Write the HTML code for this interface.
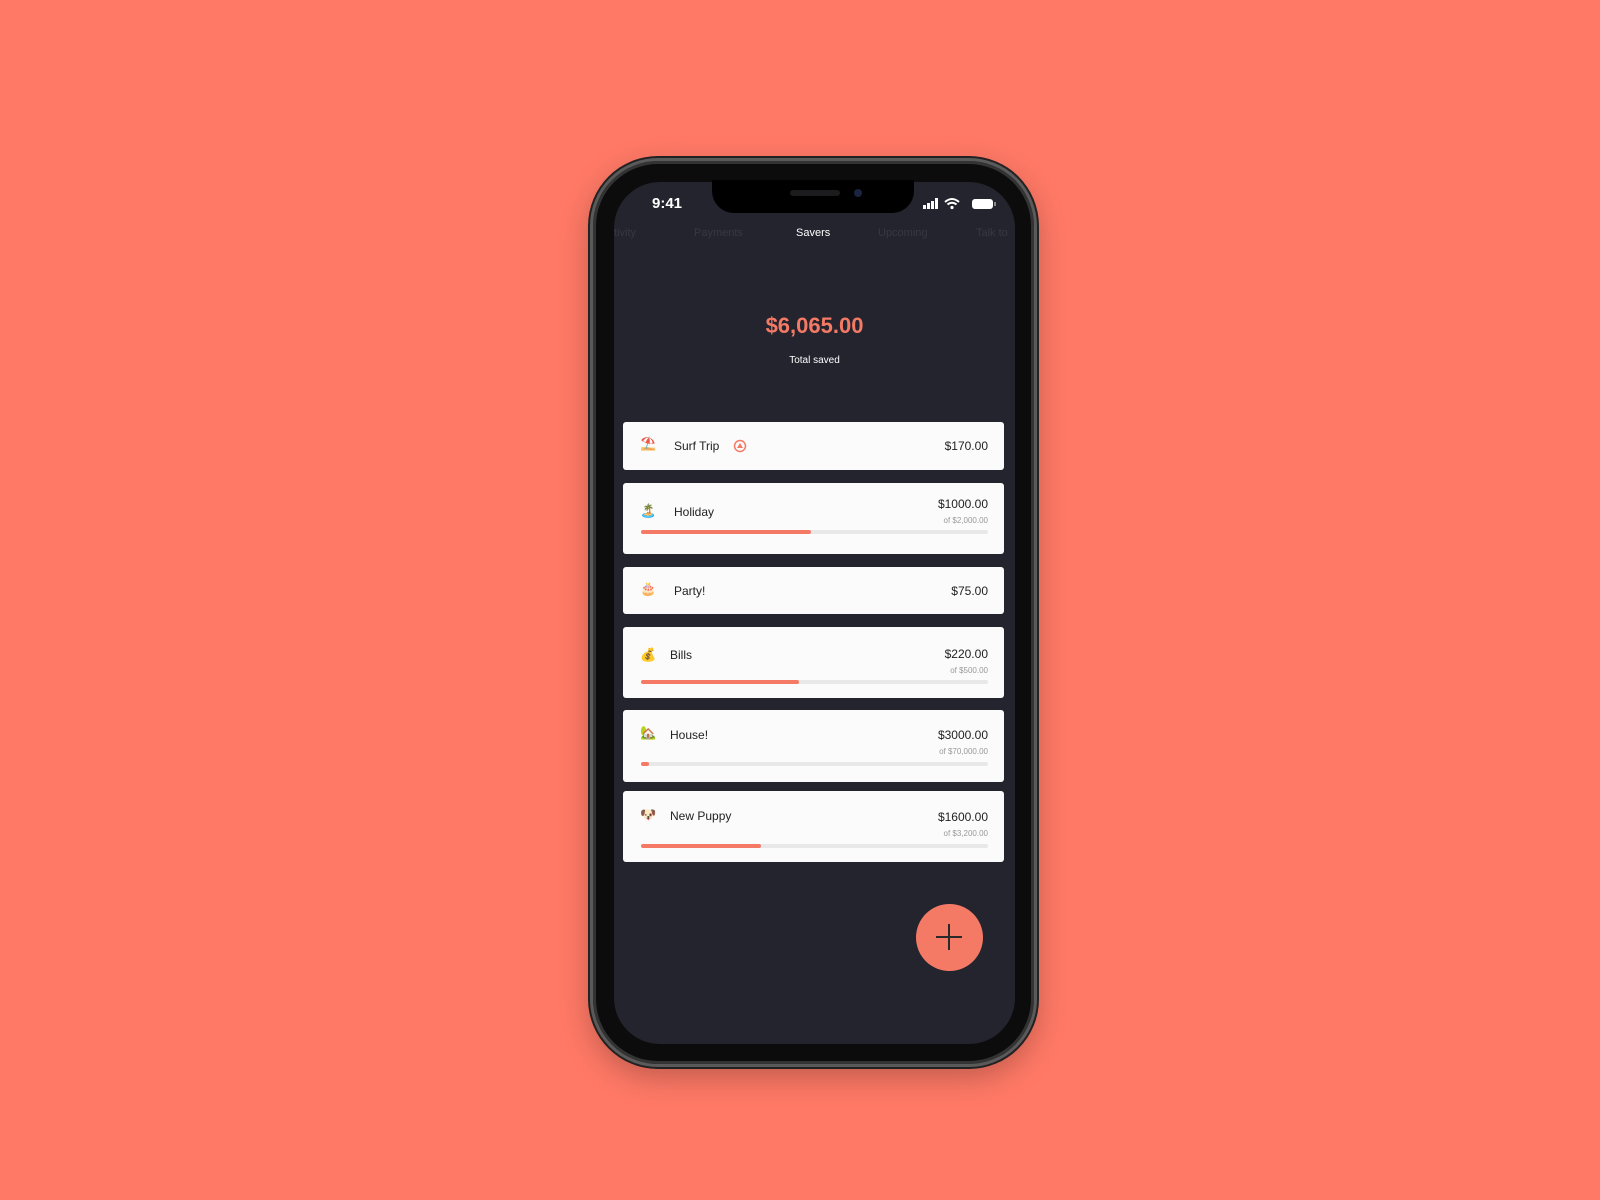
<!DOCTYPE html>
<html><head><meta charset="utf-8"><style>
*{margin:0;padding:0;box-sizing:border-box}
body{width:1600px;height:1200px;background:#ff7966;position:relative;overflow:hidden;font-family:"Liberation Sans",sans-serif}
.abs{position:absolute}
.phone{left:590px;top:158px;width:447px;height:909px;border-radius:68px;background:#0c0c0c;border:3px solid #5a5a5a;box-shadow:0 0 0 2px #222,inset 0 0 0 3px #333,0 10px 30px rgba(0,0,0,.25)}
.screen{left:614px;top:182px;width:401px;height:862px;border-radius:46px;background:#23242e;overflow:hidden}
.notch{left:712px;top:180px;width:202px;height:33px;background:#000;border-radius:0 0 22px 22px}
.card{position:absolute;left:623px;width:381px;background:#fbfbfb;border-radius:3px}
.t{position:absolute;font-size:12px;color:#222}
.amt{position:absolute;right:16px;font-size:12px;color:#222}
.of{position:absolute;right:16px;font-size:8px;color:#999}
.bar{position:absolute;left:18px;width:347px;height:4px;background:#e8e8e8;border-radius:2px}
.bar i{display:block;height:4px;background:#f47a66;border-radius:2px}
.ic{position:absolute;left:17px;font-size:13px}
.tab{position:absolute;top:227px;font-size:11px;color:#363843}
</style></head><body>
<div class="abs phone"></div>
<div class="abs screen"></div>
<div class="abs notch"></div>
<div class="abs" style="left:790px;top:190px;width:50px;height:6px;border-radius:3px;background:#1c1c1e"></div>
<div class="abs" style="left:854px;top:189px;width:8px;height:8px;border-radius:4px;background:#1b2340"></div>
<div class="abs" style="left:652px;top:195px;color:#fff;font-size:15px;font-weight:bold">9:41</div>
<svg class="abs" style="left:920px;top:197px" width="80" height="14">
<rect x="3" y="8" width="3" height="4" fill="#fff"/><rect x="7" y="6" width="3" height="6" fill="#fff"/><rect x="11" y="4" width="3" height="8" fill="#fff"/><rect x="15" y="1" width="3" height="11" fill="#fff"/>
<path d="M25 5 Q32 -1 39 5 M27.5 7.5 Q32 4 36.5 7.5" stroke="#fff" stroke-width="2" fill="none"/><circle cx="32" cy="10.5" r="1.6" fill="#fff"/>
<rect x="52" y="2" width="21" height="10" rx="3" fill="#fff"/><rect x="74" y="5" width="2" height="4" fill="#888"/>
</svg>
<div class="tab" style="left:614px">tivity</div>
<div class="tab" style="left:694px">Payments</div>
<div class="tab" style="left:796px;color:#fff">Savers</div>
<div class="tab" style="left:878px">Upcoming</div>
<div class="tab" style="left:976px">Talk to</div>
<div class="abs" style="left:614px;width:401px;top:313px;text-align:center;color:#f47a66;font-size:22px;font-weight:bold">$6,065.00</div>
<div class="abs" style="left:614px;width:401px;top:355px;text-align:center;color:#fff;font-size:10px">Total saved</div>

<div class="card" style="top:422px;height:48px"><span class="ic" style="top:14px">⛱️</span><span class="t" style="left:51px;top:17px">Surf Trip</span>
<svg class="abs" style="left:110px;top:17px" width="14" height="14"><circle cx="7" cy="7" r="5.5" stroke="#f47a66" stroke-width="1.5" fill="none"/><path d="M7 4 L10 9 L4 9Z" fill="#f47a66"/></svg>
<span class="amt" style="top:17px">$170.00</span></div>

<div class="card" style="top:483px;height:71px"><span class="ic" style="top:20px">🏝️</span><span class="t" style="left:51px;top:22px">Holiday</span><span class="amt" style="top:14px">$1000.00</span><span class="of" style="top:33px">of $2,000.00</span><div class="bar" style="top:47px"><i style="width:170px"></i></div></div>

<div class="card" style="top:567px;height:47px"><span class="ic" style="top:14px">🎂</span><span class="t" style="left:51px;top:17px">Party!</span><span class="amt" style="top:17px">$75.00</span></div>

<div class="card" style="top:627px;height:71px"><span class="ic" style="top:20px">💰</span><span class="t" style="left:47px;top:21px">Bills</span><span class="amt" style="top:20px">$220.00</span><span class="of" style="top:39px">of $500.00</span><div class="bar" style="top:53px"><i style="width:158px"></i></div></div>

<div class="card" style="top:710px;height:72px"><span class="ic" style="top:15px">🏡</span><span class="t" style="left:47px;top:18px">House!</span><span class="amt" style="top:18px">$3000.00</span><span class="of" style="top:37px">of $70,000.00</span><div class="bar" style="top:52px"><i style="width:8px"></i></div></div>

<div class="card" style="top:791px;height:71px"><span class="ic" style="top:16px">🐶</span><span class="t" style="left:47px;top:18px">New Puppy</span><span class="amt" style="top:19px">$1600.00</span><span class="of" style="top:38px">of $3,200.00</span><div class="bar" style="top:53px"><i style="width:120px"></i></div></div>

<div class="abs" style="left:916px;top:904px;width:67px;height:67px;border-radius:50%;background:#f47a66"></div>
<div class="abs" style="left:936px;top:936px;width:26px;height:2px;background:#2a2a2a"></div>
<div class="abs" style="left:948px;top:924px;width:2px;height:26px;background:#2a2a2a"></div>
</body></html>
